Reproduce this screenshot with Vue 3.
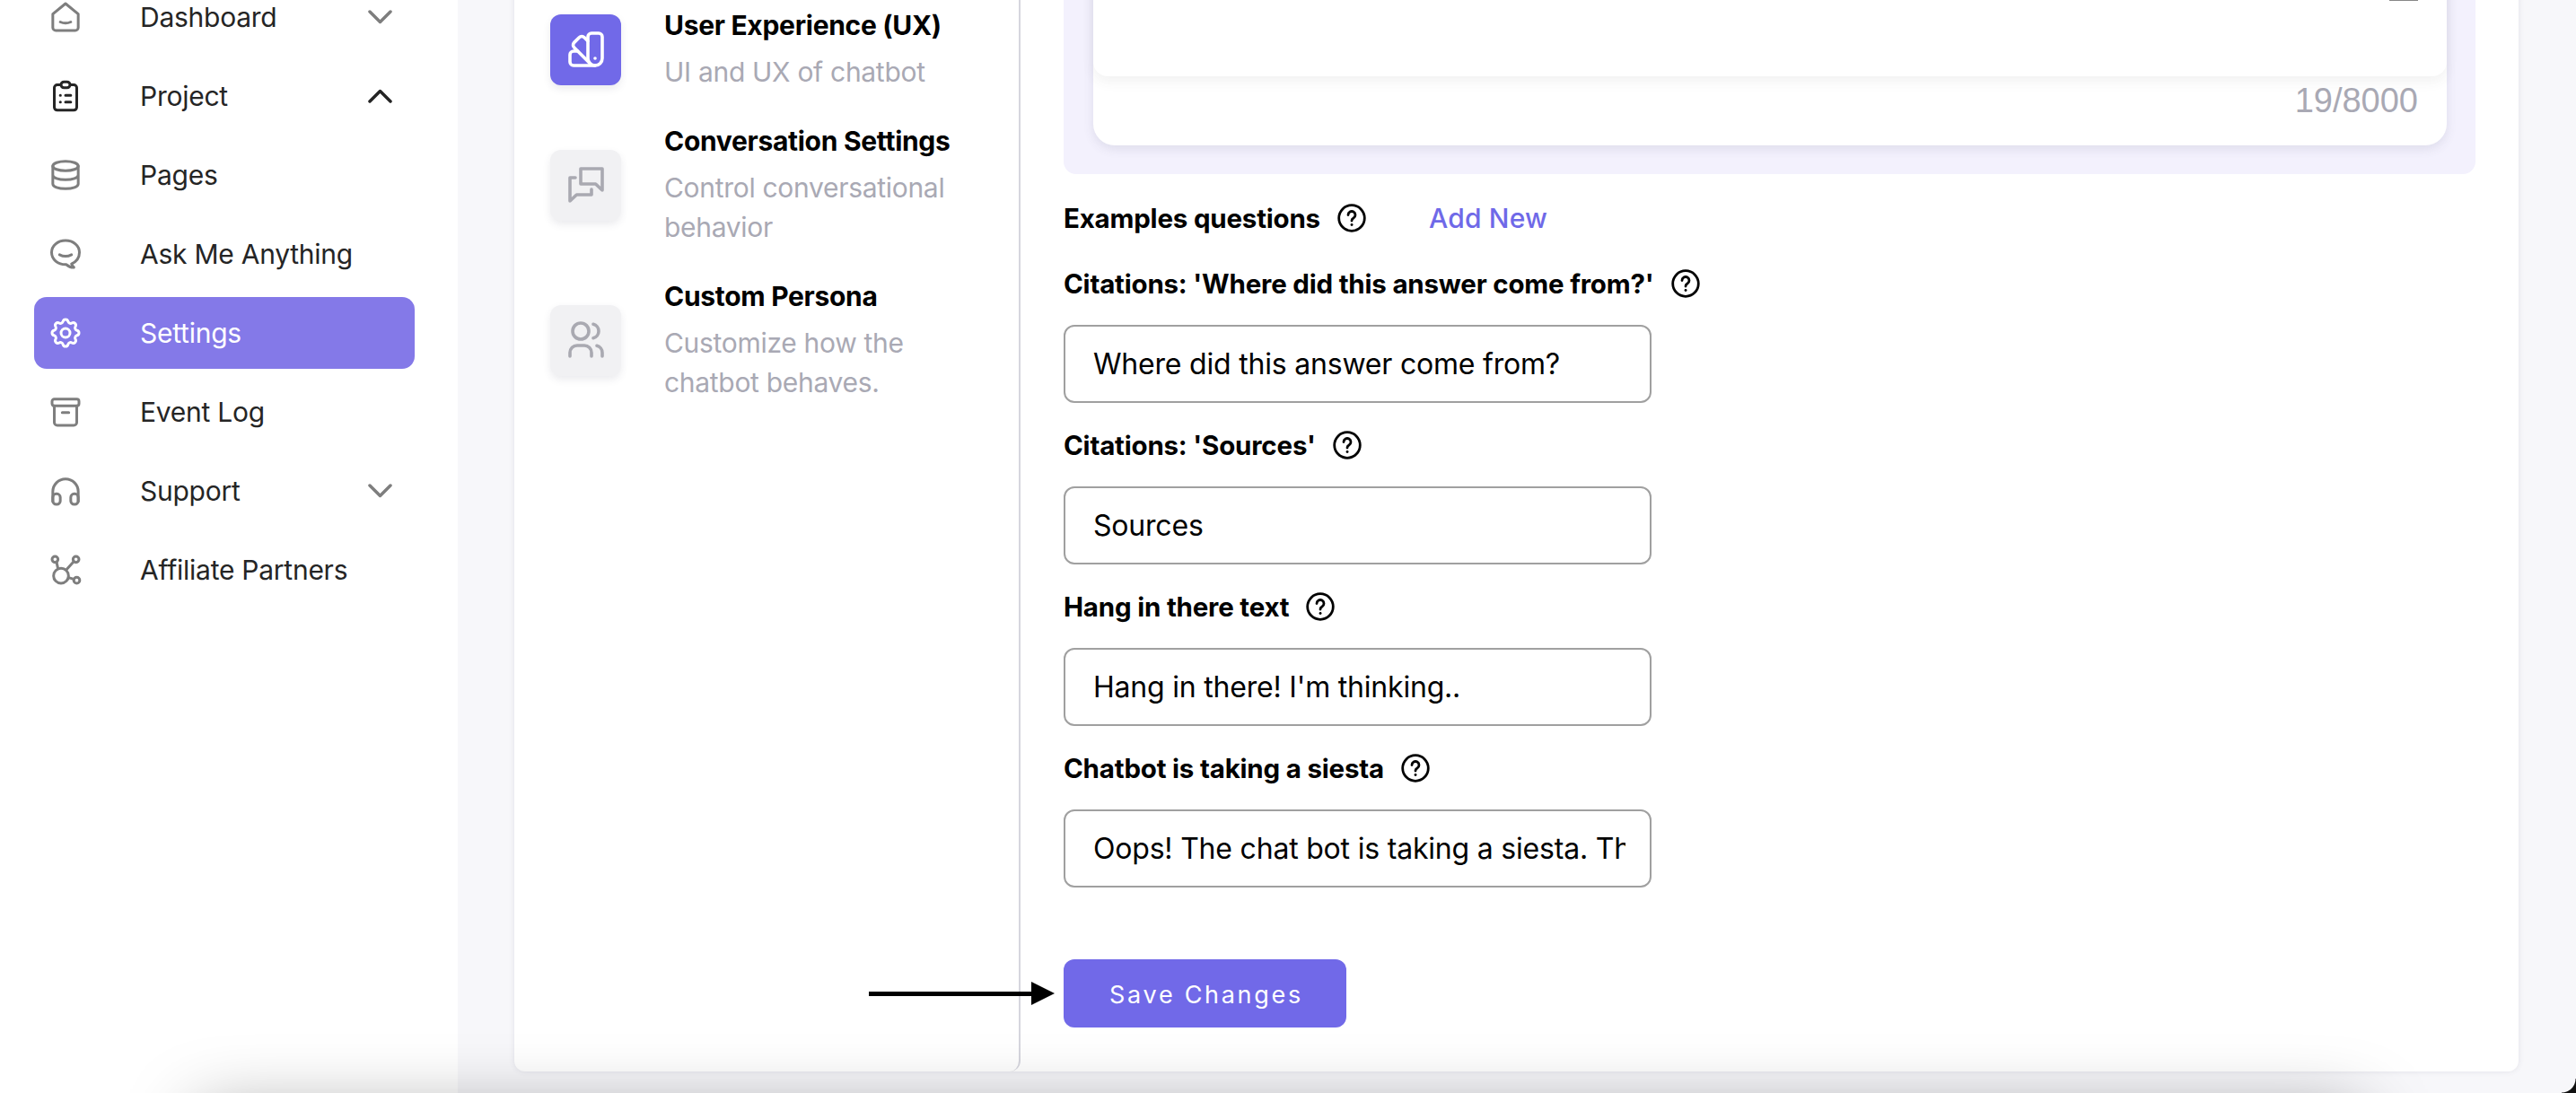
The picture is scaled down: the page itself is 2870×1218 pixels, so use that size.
<script setup>
const fields = [
  { label: "Citations: 'Where did this answer come from?'", value: 'Where did this answer come from?' },
  { label: "Citations: 'Sources'", value: 'Sources' },
  { label: 'Hang in there text', value: "Hang in there! I'm thinking.." },
  { label: 'Chatbot is taking a siesta', value: 'Oops! The chat bot is taking a siesta. Thanks for your patience.' },
]
</script>

<template>
  <div class="page">
    <aside class="side">
      <nav class="nav">
        <a class="item">
          <svg class="ic" viewBox="0 0 24 24"><path d="M3.500 10 12 3l8.500 7v9a2 2 0 0 1-2 2h-13a2 2 0 0 1-2-2z"/><path d="M8.500 15.300q3.500 1.600 7 0"/></svg>
          <span class="txt">Dashboard</span>
          <svg class="chev" viewBox="0 0 27 16"><path d="M2 2l11.500 11.500L25 2"/></svg>
        </a>
        <a class="item dark">
          <svg class="ic" viewBox="0 0 24 24"><rect x="4.500" y="4.500" width="15" height="17" rx="2"/><rect x="9" y="2.500" width="6" height="4" rx="2" fill="#fff"/><path d="M8.500 11.500h.1M8.500 16h.1M12 11.500h3.500M12 16h3.500"/></svg>
          <span class="txt">Project</span>
          <svg class="chev" viewBox="0 0 27 16"><path d="M2 14L13.500 2.500 25 14"/></svg>
        </a>
        <a class="item">
          <svg class="ic" viewBox="0 0 24 24"><ellipse cx="12" cy="6" rx="8.500" ry="3.200"/><path d="M3.500 6v12c0 1.800 3.800 3.200 8.500 3.200s8.500-1.400 8.500-3.200V6M3.500 12c0 1.800 3.800 3.200 8.500 3.200s8.500-1.400 8.500-3.200"/></svg>
          <span class="txt">Pages</span>
        </a>
        <a class="item">
          <svg class="ic" viewBox="0 0 24 24"><path d="M12 3c5.200 0 9.300 3.500 9.300 8 0 3.600-2.500 6.400-5.300 7.700.3 1 .9 1.700 1.600 2.300-2 0-3.800-.7-5-1.900C6.800 19.300 2.700 15.600 2.700 11 2.700 6.500 6.800 3 12 3z"/><path d="M8 12.500q4 2 8 0"/></svg>
          <span class="txt">Ask Me Anything</span>
        </a>
        <a class="item active">
          <svg class="ic" viewBox="0 0 24 24"><path d="M10.325 4.317c.426-1.756 2.924-1.756 3.350 0a1.724 1.724 0 0 0 2.573 1.066c1.543-.94 3.310.826 2.370 2.370a1.724 1.724 0 0 0 1.065 2.572c1.756.426 1.756 2.924 0 3.350a1.724 1.724 0 0 0-1.066 2.573c.94 1.543-.826 3.310-2.370 2.370a1.724 1.724 0 0 0-2.572 1.065c-.426 1.756-2.924 1.756-3.350 0a1.724 1.724 0 0 0-2.573-1.066c-1.543.94-3.310-.826-2.370-2.370a1.724 1.724 0 0 0-1.065-2.572c-1.756-.426-1.756-2.924 0-3.350a1.724 1.724 0 0 0 1.066-2.573c-.94-1.543.826-3.310 2.370-2.370c1 .608 2.296.07 2.572-1.065z"/><circle cx="12" cy="12" r="3"/></svg>
          <span class="txt">Settings</span>
        </a>
        <a class="item">
          <svg class="ic" viewBox="0 0 24 24"><rect x="3" y="3.500" width="18" height="4.500" rx="1.500"/><path d="M4.500 8v11a2 2 0 0 0 2 2h11a2 2 0 0 0 2-2V8M9.800 12.500h4.400"/></svg>
          <span class="txt">Event Log</span>
        </a>
        <a class="item">
          <svg class="ic" viewBox="0 0 24 24"><path d="M3.500 19v-6.500a8.500 8.500 0 0 1 17 0V19"/><rect x="3.500" y="14" width="5" height="7" rx="2.300"/><rect x="15.500" y="14" width="5" height="7" rx="2.300"/></svg>
          <span class="txt">Support</span>
          <svg class="chev" viewBox="0 0 27 16"><path d="M2 2l11.500 11.500L25 2"/></svg>
        </a>
        <a class="item">
          <svg class="ic" viewBox="0 0 24 24"><circle cx="9" cy="16" r="5"/><circle cx="5" cy="5" r="2"/><circle cx="19" cy="5" r="2"/><circle cx="19.500" cy="19" r="2"/><path d="M6 6.800l1 4.500M17.500 6.500l-5 5.500M14 17.200l3.500 1"/></svg>
          <span class="txt">Affiliate Partners</span>
        </a>
      </nav>
    </aside>

    <main class="card">
      <section class="tabs">
        <div class="tab">
          <div class="tab-ic on">
            <svg viewBox="0 0 24 24"><path d="M19 3h-4a2 2 0 0 0-2 2v12a4 4 0 0 0 8 0V5a2 2 0 0 0-2-2"/><path d="M13 7.350l-2-2a2 2 0 0 0-2.828 0L5.344 8.178a2 2 0 0 0 0 2.828l9 9"/><path d="M7.300 13H5a2 2 0 0 0-2 2v4a2 2 0 0 0 2 2h12"/><path d="M17 17v.01"/></svg>
          </div>
          <div class="tab-txt"><div class="t">User Experience (UX)</div><div class="s">UI and UX of chatbot</div></div>
        </div>
        <div class="tab">
          <div class="tab-ic">
            <svg viewBox="0 0 24 24"><path d="M9 3h12v12l-3.700-3.500H9zM6 8H3v13l3.700-3.500H15v-3"/></svg>
          </div>
          <div class="tab-txt"><div class="t">Conversation Settings</div><div class="s">Control conversational behavior</div></div>
        </div>
        <div class="tab">
          <div class="tab-ic">
            <svg viewBox="0 0 24 24"><circle cx="9" cy="7" r="4.500"/><path d="M3 21v-2a4 4 0 0 1 4-4h4a4 4 0 0 1 4 4v2M16 3.130a4 4 0 0 1 0 7.750M21 21v-2a4 4 0 0 0-3-3.850"/></svg>
          </div>
          <div class="tab-txt"><div class="t">Custom Persona</div><div class="s">Customize how the chatbot behaves.</div></div>
        </div>
      </section>

      <section class="form">
        <div class="panel">
          <div class="inner">
            <div class="area"><span class="grip"></span></div>
            <div class="count">19/8000</div>
          </div>
        </div>

        <div class="label first">
          <span>Examples questions</span>
          <svg class="help" viewBox="0 0 32 32"><circle cx="16" cy="16" r="14.300"/><path d="M12 12.500a4 4 0 1 1 6 3.500c-1.400.8-2 1.700-2 3"/><path d="M16 23.500h.1"/></svg>
          <span class="add">Add New</span>
        </div>

        <template v-for="f in fields" :key="f.label">
          <div class="label">
            <span>{{ f.label }}</span>
            <svg class="help" viewBox="0 0 32 32"><circle cx="16" cy="16" r="14.300"/><path d="M12 12.500a4 4 0 1 1 6 3.500c-1.400.8-2 1.700-2 3"/><path d="M16 23.500h.1"/></svg>
          </div>
          <input class="input" :value="f.value" readonly />
        </template>

        <div class="actions">
          <button class="save">Save Changes</button>
          <svg class="arrow" viewBox="0 0 208 28"><path d="M0 12h182v5H0z"/><path d="M181 1l26 13-26 13z"/></svg>
        </div>
      </section>
    </main>

    <div class="shade"></div>
    <div class="corner"></div>
  </div>
</template>

<style>
html, body { margin: 0; background: #f7f7fa; }
</style>

<style scoped>
.page {
  position: relative;
  display: flex;
  width: 2870px;
  height: 1218px;
  overflow: hidden;
  background: #f7f7fa;
  font-family: "Inter", "Liberation Sans", sans-serif;
}
.side {
  width: 510px;
  flex: none;
  background: #fff;
}
.nav {
  margin-top: -25px;
  display: flex;
  flex-direction: column;
  padding: 0 48px 0 38px;
}
.item {
  height: 80px;
  margin: 4px 0;
  padding: 0 25px 0 15px;
  display: flex;
  align-items: center;
  gap: 63px;
  border-radius: 14px;
  color: #252525;
  font-size: 30px;
  letter-spacing: -0.25px;
}
.txt { flex: 1; }
.ic {
  width: 40px;
  height: 40px;
  flex: none;
  fill: none;
  stroke: #7e7e7e;
  stroke-width: 1.800;
  stroke-linecap: round;
  stroke-linejoin: round;
}
.chev {
  width: 27px;
  height: 16px;
  flex: none;
  fill: none;
  stroke: #7e7e7e;
  stroke-width: 3.500;
  stroke-linecap: round;
  stroke-linejoin: round;
}
.dark .ic { stroke: #252525; }
.dark .chev { stroke: #252525; }
.active { background: #8479e8; color: #fff; }
.active .ic { stroke: #fff; }

.card {
  width: 2233px;
  margin: -40px 0 24px 63px;
  display: flex;
  background: #fff;
  border-radius: 0 0 12px 12px;
  box-shadow: 0 0 6px rgba(70, 70, 110, 0.12);
  flex: none;
}
.tabs {
  width: 564px;
  flex: none;
  box-sizing: border-box;
  padding: 44px 20px 0 40px;
  border-right: 2px solid #d6d6de;
  border-bottom-right-radius: 12px;
  display: flex;
  flex-direction: column;
  gap: 27px;
}
.tab {
  display: flex;
  align-items: center;
  gap: 48px;
}
.tab-txt {
  max-width: 345px;
  margin-bottom: 4px;
}
.tab-ic {
  width: 79px;
  height: 79px;
  flex: none;
  display: flex;
  align-items: center;
  justify-content: center;
  border-radius: 12px;
  background: #f1f1f3;
  box-shadow: 0 4px 8px rgba(60, 60, 90, 0.1);
}
.tab-ic svg {
  width: 48px;
  height: 48px;
  fill: none;
  stroke: #a9a9b1;
  stroke-width: 1.800;
  stroke-linecap: round;
  stroke-linejoin: round;
}
.tab-ic.on { background: #7169e8; }
.tab-ic.on svg { stroke: #fff; }
.t {
  font-size: 30px;
  line-height: 48px;
  font-weight: 700;
  color: #000;
  letter-spacing: -0.3px;
  white-space: nowrap;
}
.s {
  margin-top: 6px;
  font-size: 30px;
  line-height: 44px;
  color: #a9a9b4;
  letter-spacing: -0.3px;
}

.form {
  flex: 1;
  padding: 0 48px;
}
.panel {
  padding: 0 32px 32px 33px;
  background: #f3f1fd;
  border-radius: 0 0 14px 14px;
}
.inner {
  background: #fff;
  border-radius: 0 0 24px 24px;
  box-shadow: 0 4px 12px rgba(70, 70, 110, 0.12);
}
.area {
  position: relative;
  height: 125px;
  background: #fff;
  border-radius: 0 0 16px 16px;
  box-shadow: 0 6px 14px rgba(70, 70, 70, 0.07);
}
.grip {
  position: absolute;
  top: 39px;
  right: 32px;
  width: 32px;
  height: 2px;
  background: #888;
}
.count {
  height: 77px;
  box-sizing: border-box;
  padding: 7px 32px 0 0;
  text-align: right;
  font-family: "Liberation Sans", sans-serif;
  font-size: 38px;
  line-height: 40px;
  color: #a9a9b4;
}
.label {
  height: 40px;
  margin: 27px 0 26px;
  display: flex;
  align-items: center;
  gap: 19px;
  font-size: 29.500px;
  font-weight: 700;
  color: #000;
  letter-spacing: -0.2px;
}
.label.first { margin: 29px 0 33px; }
.help {
  width: 32px;
  height: 32px;
  flex: none;
  fill: none;
  stroke: #000;
  stroke-width: 2.800;
  stroke-linecap: round;
}
.add {
  margin-left: 51px;
  color: #6f69e8;
  font-size: 30px;
  font-weight: 500;
  letter-spacing: 0.2px;
}
.input {
  display: block;
  box-sizing: border-box;
  width: 655px;
  height: 87px;
  padding: 0 27px 0 31px;
  border: 2px solid #a0a0a0;
  border-radius: 12px;
  outline: none;
  background: #fff;
  color: #000;
  font-family: inherit;
  font-size: 32px;
  letter-spacing: -0.2px;
}
.actions {
  position: relative;
  margin-top: 80px;
}
.save {
  display: block;
  width: 315px;
  height: 76px;
  padding: 2px 0 0 3px;
  border: 0;
  border-radius: 12px;
  background: #7169e8;
  color: #fff;
  font-family: inherit;
  font-size: 27px;
  letter-spacing: 2.700px;
}
.arrow {
  position: absolute;
  left: -217px;
  top: 24px;
  width: 208px;
  height: 28px;
  fill: #000;
}
.shade {
  position: absolute;
  left: 220px;
  width: 2410px;
  top: 1240px;
  height: 120px;
  box-shadow: 0 0 80px rgba(0, 0, 0, 0.38);
  background: rgba(0, 0, 0, 0.38);
  pointer-events: none;
}
.corner {
  position: absolute;
  right: 0;
  bottom: 0;
  width: 16px;
  height: 16px;
  background: radial-gradient(circle at 0 0, transparent 15px, #111 16px);
  pointer-events: none;
}
</style>
